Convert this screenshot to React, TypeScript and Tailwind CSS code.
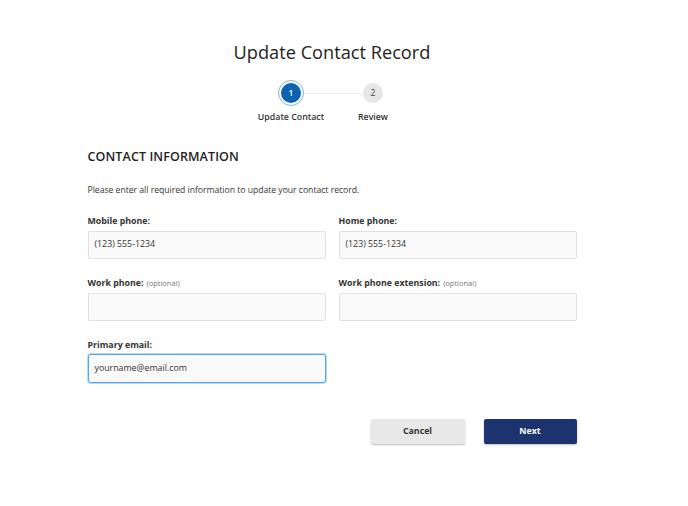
const FONT = { fontFamily: '"Open Sans", "Liberation Sans", sans-serif' };

function Field({
  label,
  optional,
  value,
  focused,
}: {
  label: string;
  optional?: boolean;
  value?: string;
  focused?: boolean;
}) {
  return (
    <div className="flex flex-col">
      <label className="h-[13px] text-[8.8px] leading-[13px] font-bold text-[#333]">
        {label}
        {optional && (
          <span className="ml-[3px] text-[7.5px] font-normal text-[#777]">(optional)</span>
        )}
      </label>
      <div
        className={
          focused
            ? "mt-[2px] flex h-[29px] items-center rounded-[3px] border border-[#4fa6ee] bg-[#fafafa] px-[6px] text-[8.8px] text-[#333] shadow-[0_0_0_1px_#b4dbf8]"
            : "mt-[3px] flex h-[28px] items-center rounded-[2px] border border-[#e1e1e1] bg-[#fafafa] px-[6px] text-[8.8px] text-[#333]"
        }
      >
        {value}
      </div>
    </div>
  );
}

function Stepper() {
  return (
    <div className="mt-[14px] flex justify-center">
      <div className="relative flex">
        <div className="absolute left-[54px] right-[52px] top-[13px] h-px bg-[#ececec]" />
        <div className="flex w-[82px] flex-col items-center">
          <div className="relative flex h-[26px] w-[26px] items-center justify-center rounded-full border border-[#7db4e2] bg-white">
            <div className="flex h-[20px] w-[20px] items-center justify-center rounded-full bg-[#0d63b0] text-[8.5px] font-semibold text-white">
              1
            </div>
          </div>
          <span className="mt-[5px] whitespace-nowrap text-[8.8px] leading-[13px] font-semibold text-[#333]">
            Update Contact
          </span>
        </div>
        <div className="flex w-[82px] flex-col items-center">
          <div className="relative mt-[3px] flex h-[20px] w-[20px] items-center justify-center rounded-full bg-[#e6e6e6] text-[8.5px] text-[#444]">
            2
          </div>
          <span className="mt-[8px] text-[8.8px] leading-[13px] font-semibold text-[#333]">Review</span>
        </div>
      </div>
    </div>
  );
}

export default function App() {
  return (
    <div className="min-h-[506px] w-full bg-white" style={FONT}>
      <div className="w-[664px] pt-[38px]">
        <h1 className="text-center text-[18.2px] leading-[28px] text-[#222]">Update Contact Record</h1>
        <Stepper />

        <div className="mx-auto mt-[23px] w-[489px]">
          <h2 className="text-[12.5px] leading-[20px] font-semibold tracking-[0.1px] text-[#222]">
            CONTACT INFORMATION
          </h2>
          <p className="mt-[17px] text-[8.6px] leading-[12px] text-[#333]">
            Please enter all required information to update your contact record.
          </p>

          <div className="mt-[19px] grid grid-cols-2 gap-x-[13px] gap-y-[18px]">
            <Field label="Mobile phone:" value="(123) 555-1234" />
            <Field label="Home phone:" value="(123) 555-1234" />
            <Field label="Work phone:" optional />
            <Field label="Work phone extension:" optional />
            <Field label="Primary email:" value="yourname@email.com" focused />
          </div>

          <div className="mt-[36px] flex justify-end gap-[19px]">
            <button className="h-[25px] w-[94px] rounded-[2px] bg-[#e8e8e8] text-[8.8px] font-bold text-[#333] shadow-[0_1px_2px_rgba(0,0,0,0.25)]">
              Cancel
            </button>
            <button className="h-[25px] w-[93px] rounded-[2px] bg-[#1d3370] text-[8.8px] font-bold text-white shadow-[0_1px_2px_rgba(0,0,0,0.25)]">
              Next
            </button>
          </div>
        </div>
      </div>
    </div>
  );
}
